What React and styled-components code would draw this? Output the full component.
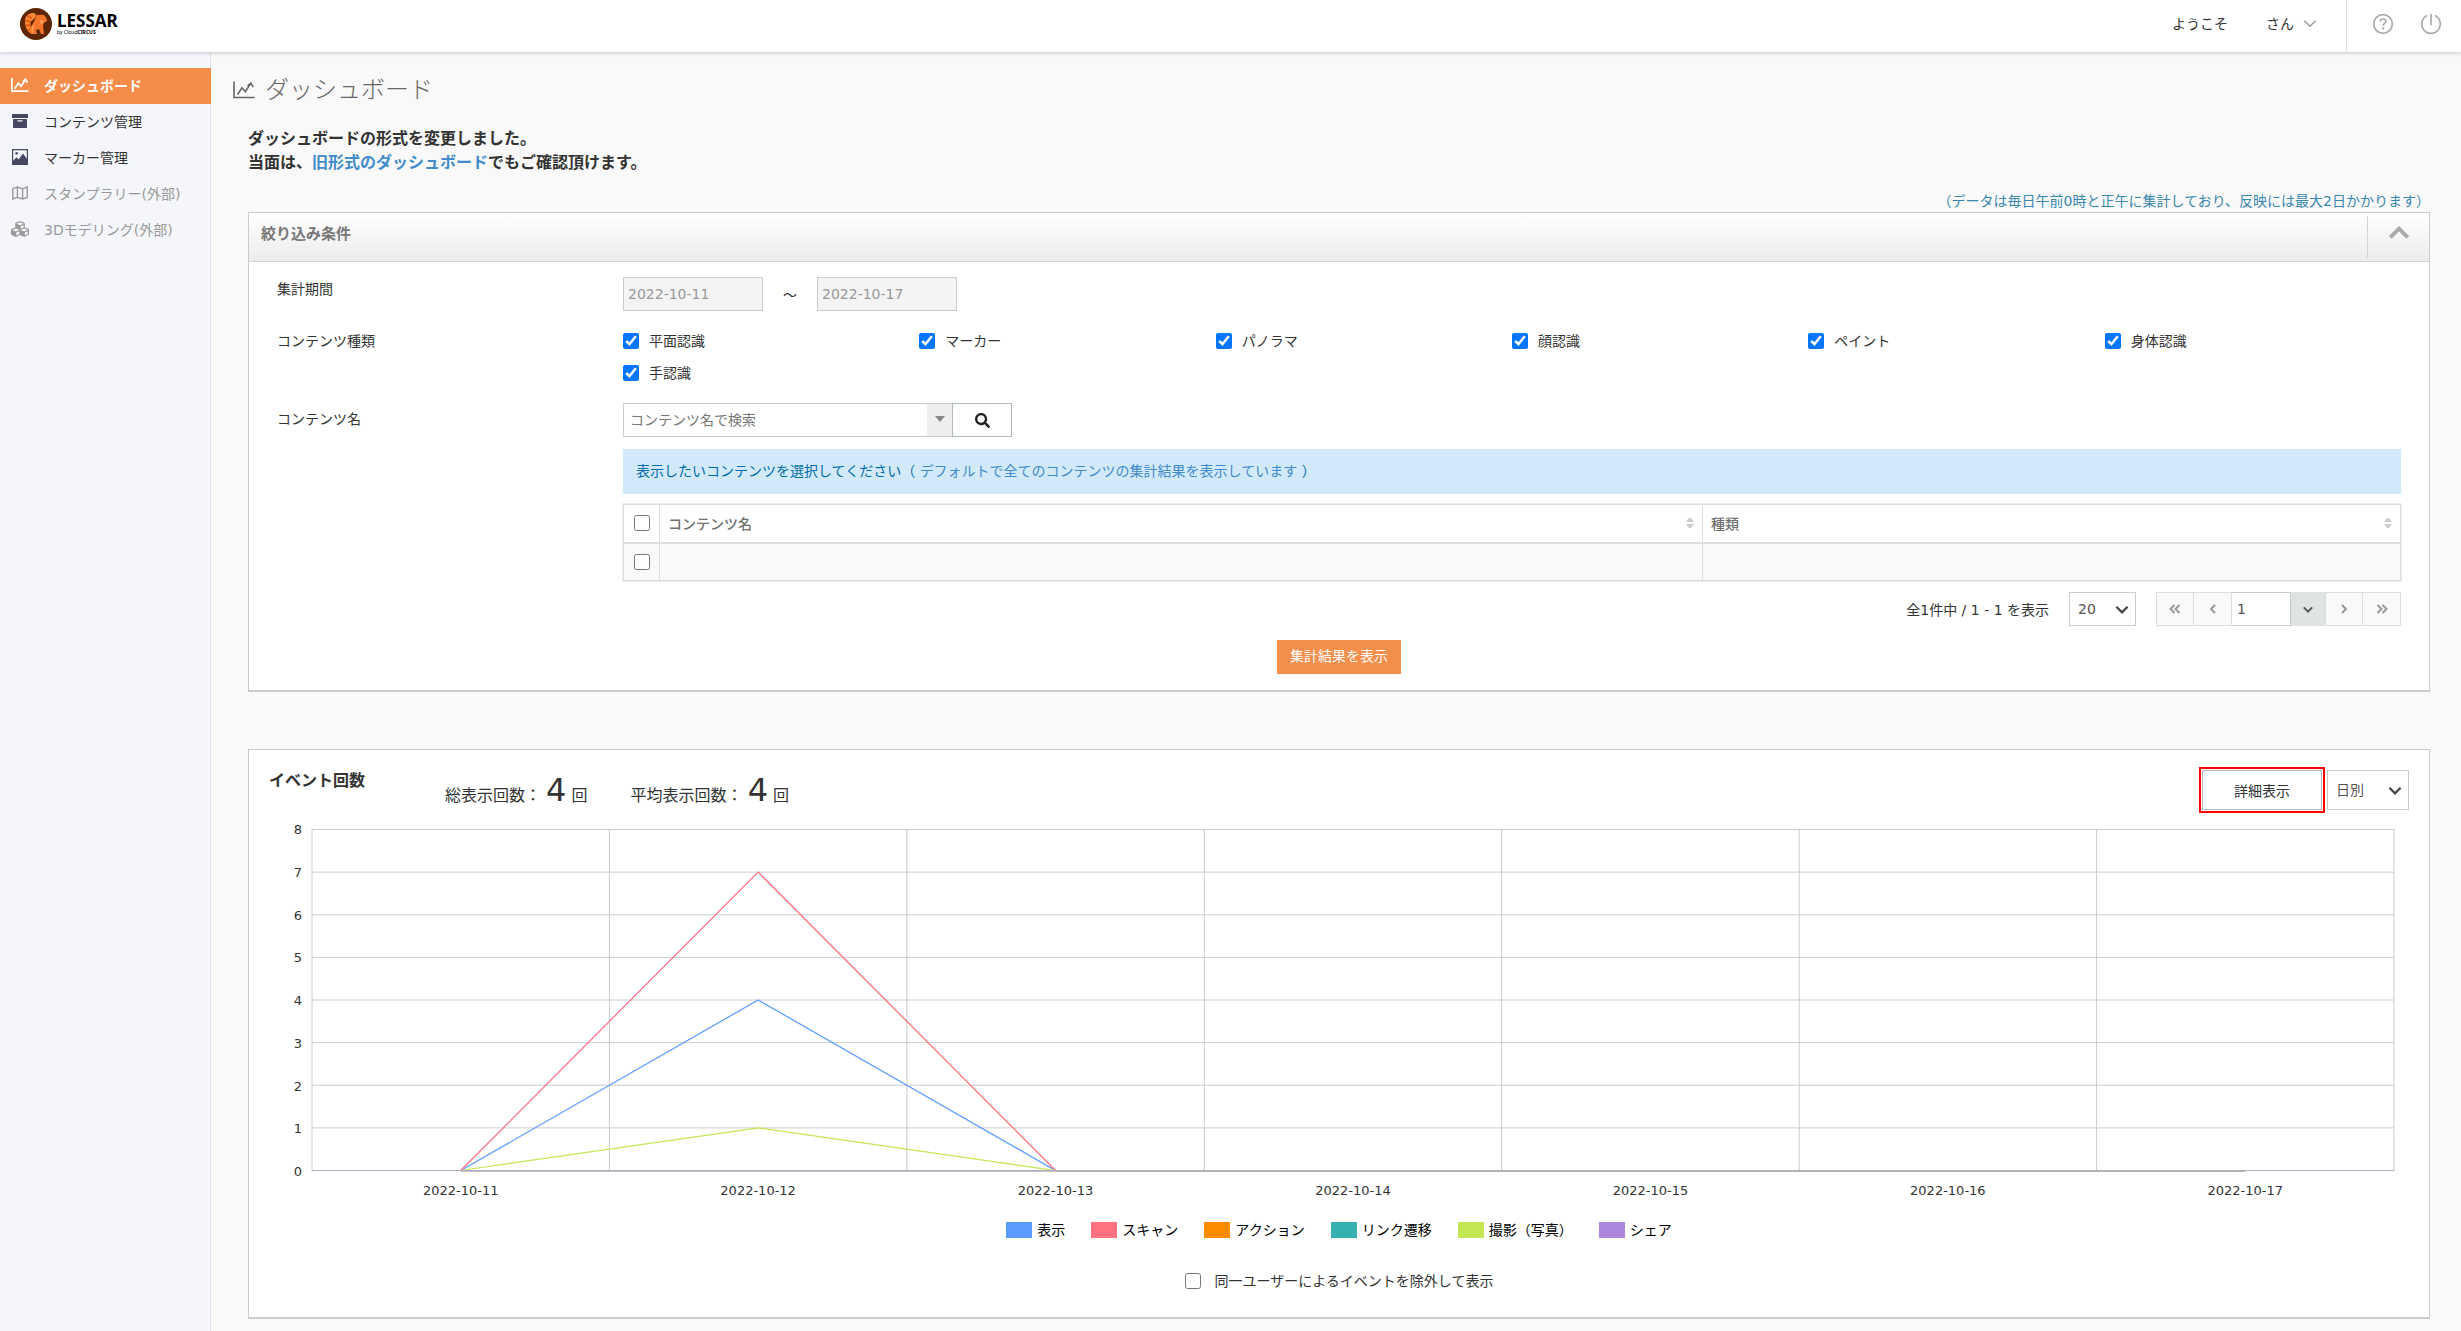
import React, { useState } from "react";
import styled, { createGlobalStyle } from "styled-components";
import { FaCubes, FaSearch } from "react-icons/fa";

const kinds = ["平面認識", "マーカー", "パノラマ", "顔認識", "ペイント", "身体認識", "手認識"];
const days = [
  "2022-10-11",
  "2022-10-12",
  "2022-10-13",
  "2022-10-14",
  "2022-10-15",
  "2022-10-16",
  "2022-10-17",
];
const ticks = [8, 7, 6, 5, 4, 3, 2, 1, 0];
const series = [
  { name: "表示", color: "#5b9cff", values: [0, 4, 0, 0, 0, 0, 0] },
  { name: "スキャン", color: "#ff7081", values: [0, 7, 0, 0, 0, 0, 0] },
  { name: "アクション", color: "#ff8c00", values: [0, 0, 0, 0, 0, 0, 0] },
  { name: "リンク遷移", color: "#36b0b0", values: [0, 0, 0, 0, 0, 0, 0] },
  { name: "撮影（写真）", color: "#c3e752", values: [0, 1, 0, 0, 0, 0, 0] },
  { name: "シェア", color: "#ab87e0", values: [0, 0, 0, 0, 0, 0, 0] },
];

const ChartIcon = ({ size, thin }) => (
  <svg width={size} height={size} viewBox="0 0 22 22" fill="none" stroke="currentColor" strokeWidth={thin ? 1.6 : 2.2}>
    <path d="M1 2.5v16H21.5" />
    <path d="M4.5 15.5L9 8.8l3.3 3.8L17.6 4.5" />
    <path d="M14.6 6.8l3.2-2.6 2.4 4" />
  </svg>
);

const ArchiveIcon = () => (
  <svg width="16" height="16" viewBox="0 0 16 16" fill="currentColor">
    <path d="M0 1h16v4H0z" />
    <path fillRule="evenodd" d="M1 6h14v8.2a.8.8 0 0 1-.8.8H1.8a.8.8 0 0 1-.8-.8zM5.5 7.2v1.3h5V7.2z" />
  </svg>
);

const ImageIcon = () => (
  <svg width="16" height="16" viewBox="0 0 16 16" fill="currentColor">
    <path fillRule="evenodd" d="M0 0h16v16H0zM1.2 1.2v10.6l3.3-3.6 2 2.2L11 4.6l3.8 5.2V1.2z" />
    <circle cx="4.6" cy="4.3" r="1.3" />
  </svg>
);

const MapIcon = () => (
  <svg width="16" height="16" viewBox="0 0 16 16" fill="none" stroke="currentColor" strokeWidth="1.4">
    <path d="M.8 3.6L5.4 2l5.2 1.8 4.6-1.7v10.4L10.6 14l-5.2-1.6L.8 14zM5.4 2v10.4M10.6 3.8V14" />
  </svg>
);

const HelpIcon = () => (
  <svg width="22" height="22" viewBox="0 0 22 22" fill="none" stroke="currentColor" strokeWidth="1.7">
    <circle cx="11" cy="11" r="9.3" />
    <path d="M8.2 8.8c0-1.8 1.2-2.8 2.9-2.8s2.8 1 2.8 2.4c0 2-2.8 2-2.8 4.4" />
    <path d="M11.1 14.4v2" strokeWidth="2.2" />
  </svg>
);

const PowerIcon = () => (
  <svg width="22" height="22" viewBox="0 0 22 22" fill="none" stroke="currentColor" strokeWidth="1.7">
    <path d="M7.2 2.5a9.3 9.3 0 1 0 7.6 0M11 1v11" />
  </svg>
);

const Chevron = ({ w, h, stroke }) => (
  <svg width={w} height={h} viewBox="0 0 12 8" fill="none" stroke="currentColor" strokeWidth={stroke}>
    <path d="M1 1.5l5 5 5-5" />
  </svg>
);

const Angle = ({ double, right }) => (
  <svg width="12" height="10" viewBox="0 0 12 10" fill="none" stroke="currentColor" strokeWidth="2">
    {right ? (
      <path d={double ? "M1.5 1l4 4-4 4M6.5 1l4 4-4 4" : "M4 1l4 4-4 4"} />
    ) : (
      <path d={double ? "M5.5 1l-4 4 4 4M10.5 1l-4 4 4 4" : "M8 1L4 5l4 4"} />
    )}
  </svg>
);

const SortIcon = () => (
  <svg width="8" height="10" viewBox="0 0 8 10" fill="#ccc">
    <path d="M0 4l3-4h2l3 4zM0 6h8l-3 4H3z" />
  </svg>
);

const LogoMark = () => (
  <svg width="32" height="32" viewBox="0 0 32 32">
    <circle cx="16" cy="16" r="16" fill="#5c2600" />
    <path
      d="M13.5 5C7.5 5 4.5 9 5 14c.3 4.500 1.500 9 6 11.500L13 23c-2.500-3-3.500-6-2.500-8.500C11.500 11.500 16 11 16 7.500 16 6 15 5 13.500 5z"
      fill="#ff8b38"
    />
    <path d="M7 7.500l5 3M5 12.500l6 1.500M5.500 17.500l5.500-.500M8 22.500l4-2.500" stroke="#e3590d" strokeWidth="2" />
    <path
      d="M17 6.500l2 .8c2-.8 4.500-.6 6 .700l1.500 2.700.7 2.300-3 1.500-1.200 3 1 8.500h-3l-2-5-3 1 1 4h-6c-2.500-4 0-7.500 2-10.500l2-4z"
      fill="#f5752a"
    />
    <path d="M20 12.500l4 .5-3 3.500z" fill="#ffab66" />
    <path d="M14 17c-2 3-2 6-1 8" stroke="#ff9d52" strokeWidth="1.500" fill="none" />
  </svg>
);

const EventChart = () => {
  const x = (i) => i * 100 + 50;
  const y = (v) => 341.5 - (v * 341) / 8;
  return (
    <Chart>
      <YAxis>
        {ticks.map((t) => (
          <span key={t}>{t}</span>
        ))}
      </YAxis>
      <Plot viewBox="0 0 700 342" preserveAspectRatio="none" role="img" aria-label="イベント回数">
        <g stroke="#ccc" shapeRendering="crispEdges">
          {ticks.map((t) => (
            <line key={t} x1="0" x2="700" y1={y(t)} y2={y(t)} />
          ))}
          {[0, 1, 2, 3, 4, 5, 6, 7].map((i) => (
            <line key={i} x1={i * 100} x2={i * 100} y1="0" y2="342" />
          ))}
        </g>
        {series.map((s) => (
          <polyline
            key={s.name}
            points={s.values.map((v, i) => `${x(i)},${y(v)}`).join(" ")}
            stroke={s.color}
            strokeWidth="1.25"
          />
        ))}
        <line x1="0" x2="700" y1={y(0)} y2={y(0)} stroke="#b5abc2" />
      </Plot>
      <XAxis>
        {days.map((d) => (
          <span key={d}>{d}</span>
        ))}
      </XAxis>
    </Chart>
  );
};

export default function App() {
  const [checked, setChecked] = useState(kinds.map(() => true));
  const toggle = (i) => setChecked(checked.map((c, n) => (n === i ? !c : c)));

  return (
    <>
      <GlobalStyle />
      <Page>
        <Header>
          <Logo href="#">
            <LogoMark />
            <LogoText>
              <strong>LESSAR</strong>
              <small>
                by Cloud<b>CIRCUS</b>
              </small>
            </LogoText>
          </Logo>
          <UserMenu>
            <span>ようこそ</span>
            <UserButton>
              さん
              <Chevron w="14" h="9" stroke="1.2" />
            </UserButton>
          </UserMenu>
          <HeaderIcons>
            <IconButton aria-label="ヘルプ">
              <HelpIcon />
            </IconButton>
            <IconButton aria-label="ログアウト">
              <PowerIcon />
            </IconButton>
          </HeaderIcons>
        </Header>
        <Body>
          <Sidebar>
            <NavItem href="#" $active>
              <ChartIcon size="18" />
              ダッシュボード
            </NavItem>
            <NavItem href="#">
              <ArchiveIcon />
              コンテンツ管理
            </NavItem>
            <NavItem href="#">
              <ImageIcon />
              マーカー管理
            </NavItem>
            <NavItem href="#" $muted>
              <MapIcon />
              スタンプラリー(外部)
            </NavItem>
            <NavItem href="#" $muted>
              <FaCubes size={18} />
              3Dモデリング(外部)
            </NavItem>
          </Sidebar>
          <Main>
            <Heading>
              <ChartIcon size="22" thin />
              ダッシュボード
            </Heading>
            <Content>
              <Notice>
                ダッシュボードの形式を変更しました。
                <br />
                当面は、<a href="#">旧形式のダッシュボード</a>でもご確認頂けます。
              </Notice>
              <Note>（データは毎日午前0時と正午に集計しており、反映には最大2日かかります）</Note>

              <Panel>
                <PanelHeader>
                  <h2>絞り込み条件</h2>
                  <CollapseButton aria-label="閉じる">
                    <Chevron w="22" h="14" stroke="2.2" />
                  </CollapseButton>
                </PanelHeader>
                <Filters>
                  <FilterRow>
                    <FilterLabel as="label" htmlFor="from" $short>
                      集計期間
                    </FilterLabel>
                    <Period>
                      <DateInput id="from" defaultValue="2022-10-11" disabled />
                      <span>～</span>
                      <DateInput aria-label="終了日" defaultValue="2022-10-17" disabled />
                    </Period>
                  </FilterRow>
                  <FilterRow>
                    <FilterLabel>コンテンツ種類</FilterLabel>
                    <KindGrid>
                      {kinds.map((k, i) => (
                        <CheckLabel key={k}>
                          <Checkbox checked={checked[i]} onChange={() => toggle(i)} />
                          {k}
                        </CheckLabel>
                      ))}
                    </KindGrid>
                  </FilterRow>
                  <FilterRow>
                    <FilterLabel as="label" htmlFor="name">
                      コンテンツ名
                    </FilterLabel>
                    <FilterValue>
                      <Search>
                        <input id="name" placeholder="コンテンツ名で検索" />
                        <ComboButton aria-label="候補を開く">
                          <svg width="10" height="6" viewBox="0 0 10 6">
                            <path d="M0 0h10L5 6z" fill="currentColor" />
                          </svg>
                        </ComboButton>
                        <SearchButton aria-label="検索">
                          <FaSearch size={15} />
                        </SearchButton>
                      </Search>
                      <Alert>
                        表示したいコンテンツを選択してください（{" "}
                        <a href="#">デフォルトで全てのコンテンツの集計結果を表示しています</a> ）
                      </Alert>
                      <Table>
                        <thead>
                          <tr>
                            <CheckCell as="th">
                              <Checkbox aria-label="すべて選択" />
                            </CheckCell>
                            <NameHead>
                              <Sortable>
                                コンテンツ名
                                <SortIcon />
                              </Sortable>
                            </NameHead>
                            <th>
                              <Sortable>
                                種類
                                <SortIcon />
                              </Sortable>
                            </th>
                          </tr>
                        </thead>
                        <tbody>
                          <tr>
                            <CheckCell>
                              <Checkbox aria-label="行を選択" />
                            </CheckCell>
                            <td />
                            <td />
                          </tr>
                        </tbody>
                      </Table>
                      <Pagination>
                        <span>全1件中 / 1 - 1 を表示</span>
                        <SelectBox $width={67} $height={34}>
                          <select aria-label="表示件数" defaultValue="20">
                            <option>20</option>
                          </select>
                          <Chevron w="14" h="9" stroke="2" />
                        </SelectBox>
                        <Pager>
                          <PageButton aria-label="最初">
                            <Angle double />
                          </PageButton>
                          <PageButton aria-label="前へ">
                            <Angle />
                          </PageButton>
                          <PageInput aria-label="ページ" defaultValue="1" />
                          <PageDrop aria-label="ページを選択">
                            <Chevron w="10" h="7" stroke="2.4" />
                          </PageDrop>
                          <PageButton aria-label="次へ">
                            <Angle right />
                          </PageButton>
                          <PageButton aria-label="最後">
                            <Angle double right />
                          </PageButton>
                        </Pager>
                      </Pagination>
                    </FilterValue>
                  </FilterRow>
                  <SubmitButton>集計結果を表示</SubmitButton>
                </Filters>
              </Panel>

              <Panel>
                <EventHeader>
                  <h2>イベント回数</h2>
                  <Stat>
                    総表示回数： <b>4</b> 回
                  </Stat>
                  <Stat>
                    平均表示回数： <b>4</b> 回
                  </Stat>
                  <EventActions>
                    <DetailButton>詳細表示</DetailButton>
                    <SelectBox $width={82} $height={40}>
                      <select aria-label="集計単位" defaultValue="日別">
                        <option>日別</option>
                      </select>
                      <Chevron w="14" h="9" stroke="2" />
                    </SelectBox>
                  </EventActions>
                </EventHeader>
                <EventChart />
                <Legend>
                  {series.map((s) => (
                    <LegendItem key={s.name} $color={s.color}>
                      {s.name}
                    </LegendItem>
                  ))}
                </Legend>
                <UniqueLabel>
                  <Checkbox />
                  同一ユーザーによるイベントを除外して表示
                </UniqueLabel>
              </Panel>
            </Content>
          </Main>
        </Body>
      </Page>
    </>
  );
}

const GlobalStyle = createGlobalStyle`
  * {
    box-sizing: border-box;
  }
  body {
    margin: 0;
    background: #f9f9f9;
  }
  body, button, input, select {
    font-family: "DejaVu Sans", "Noto Sans CJK JP", sans-serif;
    font-size: 14px;
    color: #333;
  }
  h1, h2 {
    margin: 0;
  }
  button {
    padding: 0;
    border: 0;
    background: none;
    cursor: pointer;
  }
  a {
    color: #428bca;
    text-decoration: none;
  }
  svg {
    display: block;
    flex: none;
  }
`;

const Page = styled.div`
  min-height: 100vh;
  display: flex;
  flex-direction: column;
`;
const Header = styled.header`
  height: 52px;
  display: flex;
  align-items: center;
  background: #fff;
  box-shadow: 0 1px 4px rgba(0, 0, 0, 0.2);
  z-index: 1;
`;
const Logo = styled.a`
  display: flex;
  align-items: center;
  gap: 5px;
  padding: 0 0 4px 20px;
  color: #000;
`;
const LogoText = styled.span`
  display: flex;
  flex-direction: column;
  font-family: "Noto Sans", sans-serif;

  strong {
    font-size: 17px;
    line-height: 16px;
  }
  small {
    font-size: 5px;
    line-height: 6px;
  }
`;
const UserMenu = styled.div`
  margin-left: auto;
  display: flex;
  align-items: center;
  gap: 38px;
  padding: 0 29px 6px 0;
`;
const UserButton = styled.button`
  display: flex;
  align-items: center;
  gap: 9px;

  svg {
    color: #999;
  }
`;
const HeaderIcons = styled.div`
  height: 100%;
  display: flex;
  align-items: center;
  gap: 26px;
  padding: 0 19px 4px 25px;
  border-left: 1px solid #ddd;
`;
const IconButton = styled.button`
  color: #aaa;
`;

const Body = styled.div`
  flex: 1;
  display: flex;
`;
const Sidebar = styled.nav`
  flex: none;
  width: 211px;
  padding-top: 16px;
  background: #f5f6fb;
  border-right: 1px solid #dbe2ec;
`;
const NavItem = styled.a`
  height: 36px;
  margin-right: -1px;
  padding: 0 12px 2px 11px;
  display: grid;
  grid-template-columns: 18px 1fr;
  column-gap: 15px;
  align-items: center;
  color: ${(p) => (p.$active ? "#fff" : p.$muted ? "#999" : "#333")};
  background: ${(p) => (p.$active ? "#f58d49" : "none")};
  font-weight: ${(p) => (p.$active ? 700 : 400)};

  svg {
    justify-self: center;
    color: ${(p) => (p.$active ? "#fff" : p.$muted ? "#999" : "#454860")};
  }
`;
const Main = styled.main`
  flex: 1;
  min-width: 0;
  padding: 22px 31px 12px 22px;
`;
const Heading = styled.h1`
  display: flex;
  align-items: center;
  gap: 10px;
  font-size: 24px;
  line-height: 32px;
  font-weight: 300;
  color: #666;
`;
const Content = styled.div`
  padding-left: 15px;
`;
const Notice = styled.p`
  margin: 21px 0 16px;
  font-size: 16px;
  line-height: 24px;
  font-weight: 700;
`;
const Note = styled.p`
  margin: 0;
  line-height: 21px;
  text-align: right;
  color: #3a87ad;
`;

const Panel = styled.section`
  background: #fff;
  border: 1px solid #ccc;
  border-bottom-width: 2px;

  & + & {
    margin-top: 57px;
  }
`;
const PanelHeader = styled.div`
  height: 49px;
  display: flex;
  align-items: stretch;
  justify-content: space-between;
  padding: 3px 0 3px 12px;
  background: linear-gradient(#fff, #ececec);
  border-bottom: 1px solid #d5d5d5;

  h2 {
    font-size: 15px;
    line-height: 36px;
    color: #777;
  }
`;
const CollapseButton = styled.button`
  width: 62px;
  display: flex;
  justify-content: center;
  padding-top: 10px;
  border-left: 1px solid #d5d5d5;
  color: #aaa;

  svg {
    transform: rotate(180deg);
  }
`;
const Filters = styled.div`
  padding: 15px 28px 16px;
  display: flex;
  flex-direction: column;
  gap: 14px;
`;
const FilterRow = styled.div`
  display: flex;
  align-items: flex-start;
`;
const FilterLabel = styled.div`
  flex: none;
  width: 346px;
  line-height: ${(p) => (p.$short ? 24 : 32)}px;
`;
const FilterValue = styled.div`
  flex: 1;
  min-width: 0;
`;
const Period = styled.div`
  display: flex;
  align-items: center;
  gap: 20px;
`;
const DateInput = styled.input`
  width: 140px;
  height: 34px;
  padding: 0 4px;
  border: 1px solid #ccc;
  background: #f4f4f4;
  color: #999;
`;
const KindGrid = styled.div`
  flex: 1;
  display: grid;
  grid-template-columns: repeat(6, 1fr);
`;
const CheckLabel = styled.label`
  display: flex;
  align-items: center;
  gap: 10px;
  line-height: 32px;
`;
const Checkbox = styled.input.attrs({ type: "checkbox" })`
  flex: none;
  width: 16px;
  height: 16px;
  margin: 0;
`;
const Search = styled.div`
  display: flex;

  input {
    width: 304px;
    height: 34px;
    padding: 0 6px;
    border: 1px solid #ccc;
    border-right: 0;
    background: #fff;
  }
  input::placeholder {
    color: #777;
  }
`;
const ComboButton = styled.button`
  width: 25px;
  display: flex;
  justify-content: center;
  padding-top: 12px;
  background: #eee;
  border: 1px solid #ccc;
  border-width: 1px 0;
  color: #888;
`;
const SearchButton = styled.button`
  width: 60px;
  display: flex;
  align-items: center;
  justify-content: center;
  border: 1px solid #adb9be;
  background: #fff;
  color: #222;
`;
const Alert = styled.div`
  margin: 12px 0 10px;
  padding: 10px 13px 11px;
  line-height: 24px;
  background: #d2e9f9;
  color: #006dad;
`;
const Table = styled.table`
  width: 100%;
  table-layout: fixed;
  border-collapse: collapse;
  outline: 1px solid #eee;

  th,
  td {
    height: 38px;
    padding: 0 8px;
    border: 1px solid #ddd;
    text-align: left;
    font-weight: 500;
    color: #707070;
  }
  th {
    border-bottom-width: 2px;
  }
  tbody tr {
    background: #f9f9f9;
  }
`;
const CheckCell = styled.td`
  width: 36px;

  && {
    padding: 0 10px;
  }
  input {
    display: block;
  }
`;
const NameHead = styled.th`
  width: 58.7%;
`;
const Sortable = styled.div`
  display: flex;
  align-items: center;
  justify-content: space-between;
`;
const Pagination = styled.div`
  margin-top: 11px;
  display: flex;
  align-items: center;
  justify-content: flex-end;
  gap: 20px;
`;
const SelectBox = styled.div`
  position: relative;
  width: ${(p) => p.$width}px;

  select {
    appearance: none;
    width: 100%;
    height: ${(p) => p.$height}px;
    padding: 0 8px;
    border: 1px solid #ccc;
    border-radius: 0;
    background: #fff;
    color: #555;
  }
  svg {
    position: absolute;
    right: 7px;
    top: 50%;
    margin-top: -4px;
    color: #444;
    pointer-events: none;
  }
`;
const Pager = styled.div`
  display: flex;
`;
const PageButton = styled.button`
  width: 38px;
  height: 34px;
  display: flex;
  align-items: center;
  justify-content: center;
  border: 1px solid #ddd;
  background: #f9f9f9;
  color: #999;

  & + & {
    border-left: 0;
  }
`;
const PageInput = styled.input`
  width: 59px;
  height: 34px;
  padding: 0 5px;
  border: 1px solid #ccc;
  border-left-width: 0;
  color: #555;
`;
const PageDrop = styled.button`
  width: 34px;
  display: flex;
  align-items: center;
  justify-content: center;
  background: #dfe3e4;
  color: #555;
`;
const SubmitButton = styled.button`
  align-self: center;
  height: 34px;
  padding: 0 13px 4px;
  background: #f38e4b;
  color: #fff;
`;

const EventHeader = styled.div`
  display: flex;
  align-items: flex-start;
  padding: 20px 20px 0;

  h2 {
    margin-right: 37px;
    font-size: 16px;
    line-height: 22px;
  }
`;
const Stat = styled.div`
  height: 40px;
  margin-left: 43px;
  font-size: 16px;
  line-height: 40px;

  b {
    font-size: 32px;
    font-weight: 400;
  }
`;
const EventActions = styled.div`
  margin-left: auto;
  display: flex;
  gap: 5px;
`;
const DetailButton = styled.button`
  width: 120px;
  height: 40px;
  border: 1px solid #adb9be;
  outline: 2px solid #f00;
  outline-offset: 1px;
  background: #fff;
`;
const Chart = styled.div`
  display: grid;
  grid-template-columns: 43px 1fr;
  grid-template-rows: 342px auto;
  row-gap: 8px;
  padding: 19px 35px 0 20px;
  font-size: 13px;
`;
const YAxis = styled.div`
  display: flex;
  flex-direction: column;
  justify-content: space-between;
  margin: -8px 10px -10px 0;
  line-height: 18px;
  text-align: right;
`;
const Plot = styled.svg`
  width: 100%;
  height: 342px;
  fill: none;
  overflow: visible;

  line,
  polyline {
    vector-effect: non-scaling-stroke;
  }
`;
const XAxis = styled.div`
  grid-column: 2;
  display: grid;
  grid-template-columns: repeat(7, 1fr);
  line-height: 24px;
  text-align: center;
`;
const Legend = styled.ul`
  display: flex;
  justify-content: center;
  gap: 26px;
  margin: 15px 0 27px;
  padding: 0;
  line-height: 24px;
  list-style: none;
  color: #000;
`;
const LegendItem = styled.li`
  display: flex;
  align-items: center;
  gap: 5px;

  &::before {
    content: "";
    width: 26px;
    height: 16px;
    background: ${(p) => p.$color};
  }
`;
const UniqueLabel = styled.label`
  display: flex;
  align-items: center;
  justify-content: center;
  gap: 14px;
  padding-bottom: 24px;
  line-height: 24px;
`;
